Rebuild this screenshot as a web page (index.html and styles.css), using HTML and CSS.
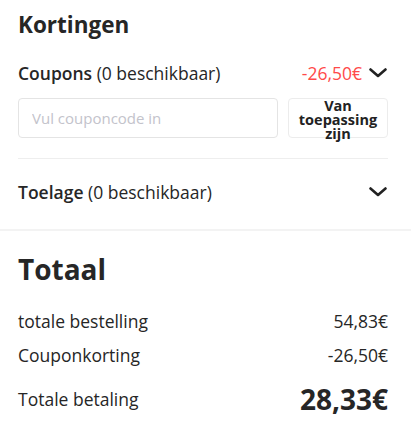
FILE: index.html
```html
<!DOCTYPE html>
<html lang="nl">
<head>
<meta charset="utf-8">
<title>Kortingen</title>
<link rel="stylesheet" href="styles.css">
</head>
<body>
<section class="discounts">
  <h2 class="section-title">Kortingen</h2>
  <div class="row head-row">
    <div class="label"><span class="strong">Coupons</span> (0 beschikbaar)</div>
    <div class="right">
      <span class="amount-red">-26,50€</span>
      <svg class="chevron" width="18" height="10" viewBox="0 0 18 10"><polyline points="1.5,1.5 9,8 16.5,1.5" fill="none" stroke="#222" stroke-width="2.6" stroke-linecap="round" stroke-linejoin="round"/></svg>
    </div>
  </div>
  <div class="coupon-form">
    <input class="coupon-input" type="text" placeholder="Vul couponcode in">
    <button class="apply-btn" type="button">Van toepassing zijn</button>
  </div>
  <div class="divider"></div>
  <div class="row head-row toelage">
    <div class="label"><span class="strong">Toelage</span> (0 beschikbaar)</div>
    <div class="right">
      <svg class="chevron" width="18" height="10" viewBox="0 0 18 10"><polyline points="1.5,1.5 9,8 16.5,1.5" fill="none" stroke="#222" stroke-width="2.6" stroke-linecap="round" stroke-linejoin="round"/></svg>
    </div>
  </div>
</section>
<div class="separator"></div>
<section class="totals">
  <h2 class="section-title big">Totaal</h2>
  <div class="row sum-row first"><span>totale bestelling</span><span>54,83€</span></div>
  <div class="row sum-row"><span>Couponkorting</span><span>-26,50€</span></div>
  <div class="row sum-row grand"><span>Totale betaling</span><span class="grand-value">28,33€</span></div>
</section>
</body>
</html>
```

FILE: styles.css
```css
* { box-sizing: border-box; }
html, body {
  margin: 0;
  padding: 0;
  background: #fff;
}
body {
  font-family: "Open Sans", "Noto Sans", sans-serif;
  color: #262626;
  font-size: 17.5px;
}
.discounts {
  padding: 10px 23px 26px 18px;
}
.totals {
  padding: 20px 23px 20px 18px;
}
.section-title {
  margin: 0;
  font-size: 22.5px;
  font-weight: 700;
  line-height: 30px;
}
.section-title.big {
  font-size: 28px;
  line-height: 36px;
}
.row {
  display: flex;
  justify-content: space-between;
  align-items: center;
}
.head-row {
  height: 22px;
  line-height: 22px;
  margin-top: 22px;
}
.strong {
  font-weight: 600;
}
.right {
  display: flex;
  align-items: center;
  gap: 7px;
}
.amount-red {
  color: #ff4a4a;
}
.chevron {
  display: block;
  margin-right: 1px;
}
.coupon-form {
  display: flex;
  gap: 10px;
  margin-top: 14px;
  height: 40px;
}
.coupon-input {
  flex: 1;
  min-width: 0;
  height: 40px;
  border: 1px solid #e4e4e4;
  border-radius: 4px;
  padding: 0 13px;
  font-family: inherit;
  font-size: 15px;
  color: #222;
  outline: none;
}
.coupon-input::placeholder {
  color: #c3c3cb;
}
.apply-btn {
  width: 100px;
  height: 40px;
  border: 1px solid #ececec;
  border-radius: 4px;
  background: #fff;
  font-family: inherit;
  font-size: 14.5px;
  font-weight: 700;
  line-height: 14px;
  color: #222;
  padding: 0 2px;
  text-align: center;
}
.divider {
  height: 1px;
  background: #eeeeee;
  margin-top: 20px;
}
.toelage {
  margin-top: 22px;
}
.separator {
  height: 2px;
  background: #f3f3f3;
}
.sum-row {
  height: 24px;
  line-height: 24px;
  margin-top: 10px;
}
.sum-row.first {
  margin-top: 22px;
}
.sum-row.grand {
  margin-top: 14px;
  height: 36px;
  line-height: 36px;
}
.grand-value {
  font-size: 28px;
  font-weight: 700;
}
```
